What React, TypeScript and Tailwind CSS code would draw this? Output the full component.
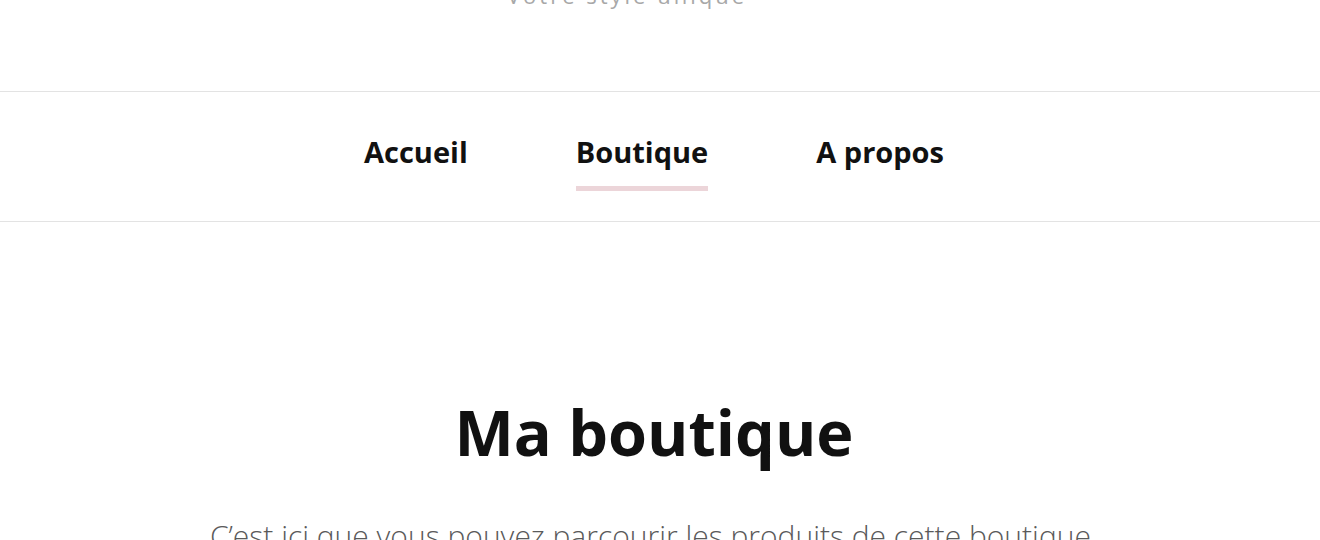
import React from 'react';

const links = [
  { label: 'Accueil', active: false },
  { label: 'Boutique', active: true },
  { label: 'A propos', active: false },
];

export default function App() {
  return (
    <main
      className="h-[540px] overflow-hidden bg-white"
      style={{ fontFamily: '"Open Sans", "Liberation Sans", sans-serif' }}
    >
      {/* Header (scrolled past the logo) */}
      <header className="h-[91px] flex justify-center pr-[66px]">
        <p className="-mt-[20px] text-[22px] leading-[30px] tracking-[3px] text-[#a8a8a8]">Votre style unique</p>
      </header>

      {/* Navigation */}
      <nav className="h-[131px] border-y border-[#e3e3e3] flex justify-center gap-[108px] pr-[12px]">
        {links.map((l) => (
          <a key={l.label} href="#" className="flex flex-col items-stretch pt-[40px]">
            <span className="text-[29px] leading-[40px] font-bold text-[#111]">{l.label}</span>
            <span className={`mt-[14px] h-[5px] ${l.active ? 'bg-[#ecd5d9]' : 'bg-transparent'}`}></span>
          </a>
        ))}
      </nav>

      {/* Intro */}
      <section className="flex flex-col items-center pt-[165px] pr-[12px]">
        <h1 className="text-[63px] leading-[90px] font-bold text-[#111]">Ma boutique</h1>
        <p className="mt-[39px] text-[30px] leading-[40px] font-light text-[#5a5a5a]">
          C’est ici que vous pouvez parcourir les produits de cette boutique.
        </p>
      </section>
    </main>
  );
}
